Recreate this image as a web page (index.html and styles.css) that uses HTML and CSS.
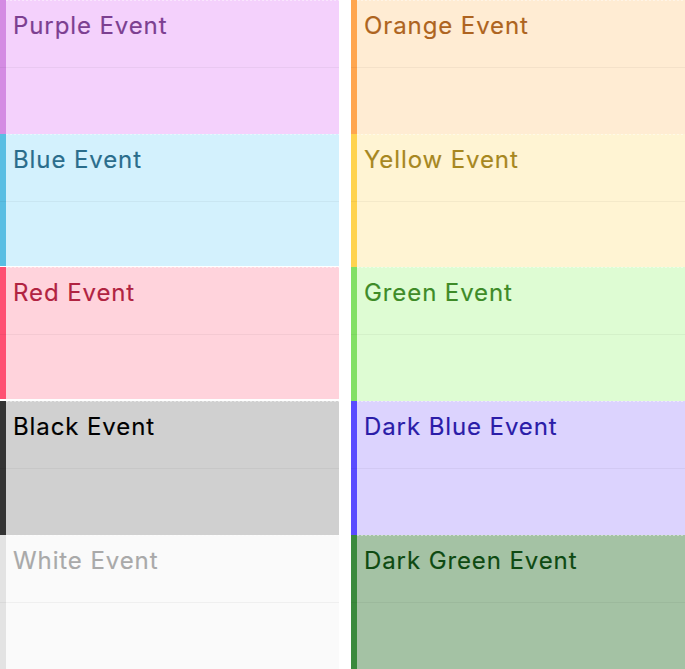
FILE: index.html
```html
<!DOCTYPE html>
<html>
<head>
<meta charset="utf-8">
<link rel="stylesheet" href="styles.css">
</head>
<body>
<div class="cal">
  <div class="col">
    <div class="ev purple h134"><div class="body"><span class="title">Purple Event</span></div></div>
    <div class="ev blue h132 gap1"><div class="body"><span class="title">Blue Event</span></div></div>
    <div class="ev red h132 gap2"><div class="body"><span class="title">Red Event</span></div></div>
    <div class="ev black h134"><div class="body"><span class="title">Black Event</span></div></div>
    <div class="ev white h134"><div class="body"><span class="title">White Event</span></div></div>
  </div>
  <div class="col">
    <div class="ev orange h134"><div class="body"><span class="title">Orange Event</span></div></div>
    <div class="ev yellow h133"><div class="body"><span class="title">Yellow Event</span></div></div>
    <div class="ev green h134"><div class="body"><span class="title">Green Event</span></div></div>
    <div class="ev darkblue h134"><div class="body"><span class="title">Dark Blue Event</span></div></div>
    <div class="ev darkgreen h134"><div class="body"><span class="title">Dark Green Event</span></div></div>
  </div>
</div>
</body>
</html>
```
FILE: styles.css
```css
html, body {
  margin: 0;
  padding: 0;
  background: #ffffff;
}
.cal {
  display: grid;
  grid-template-columns: 339px 334px;
  column-gap: 12px;
  width: 685px;
  height: 669px;
  overflow: hidden;
  font-family: Inter, "Noto Sans", sans-serif;
}
.col {
  display: flex;
  flex-direction: column;
}
.ev {
  display: flex;
  border-left: 6px solid var(--bd);
  background: var(--bg);
  position: relative;
  box-sizing: border-box;
}
.ev::after {
  content: "";
  position: absolute;
  left: -6px;
  right: 0;
  top: 67px;
  height: 1px;
  background: rgba(0, 0, 0, 0.045);
}
.h134 { height: 134px; }
.h133 { height: 133px; }
.h132 { height: 132px; }
.gap1 { margin-bottom: 1px; }
.gap2 { margin-bottom: 2px; }
.body {
  flex: 1;
  padding: 11px 0 0 7px;
  background-image: repeating-linear-gradient(90deg, rgba(255,255,255,0.45) 0 2px, transparent 2px 4px);
  background-size: 100% 1px;
  background-repeat: no-repeat;
}
.title {
  font-size: 24px;
  line-height: 30px;
  color: var(--fg);
  letter-spacing: 0.9px;
  -webkit-text-stroke: 0.15px var(--fg);
}
.purple { --bg: #f4d1fc; --bd: #d48be3; --fg: #7c3f91; }
.blue { --bg: #d3f1fd; --bd: #59bee3; --fg: #2a6d8c; }
.red { --bg: #ffd3dc; --bd: #ff4f72; --fg: #b12341; }
.black { --bg: #d0d0d0; --bd: #333333; --fg: #000000; }
.white { --bg: #fafafa; --bd: #e3e3e3; --fg: #a9a9a9; }
.orange { --bg: #ffecd3; --bd: #ffa64f; --fg: #ae6420; }
.yellow { --bg: #fff4d3; --bd: #ffd34f; --fg: #a7871f; }
.green { --bg: #defcd3; --bd: #82e065; --fg: #3e8b28; }
.darkblue { --bg: #dcd3fe; --bd: #5a4bff; --fg: #2a1ca8; }
.darkgreen { --bg: #a4c2a4; --bd: #3a8a3c; --fg: #0e4a12; }
```
